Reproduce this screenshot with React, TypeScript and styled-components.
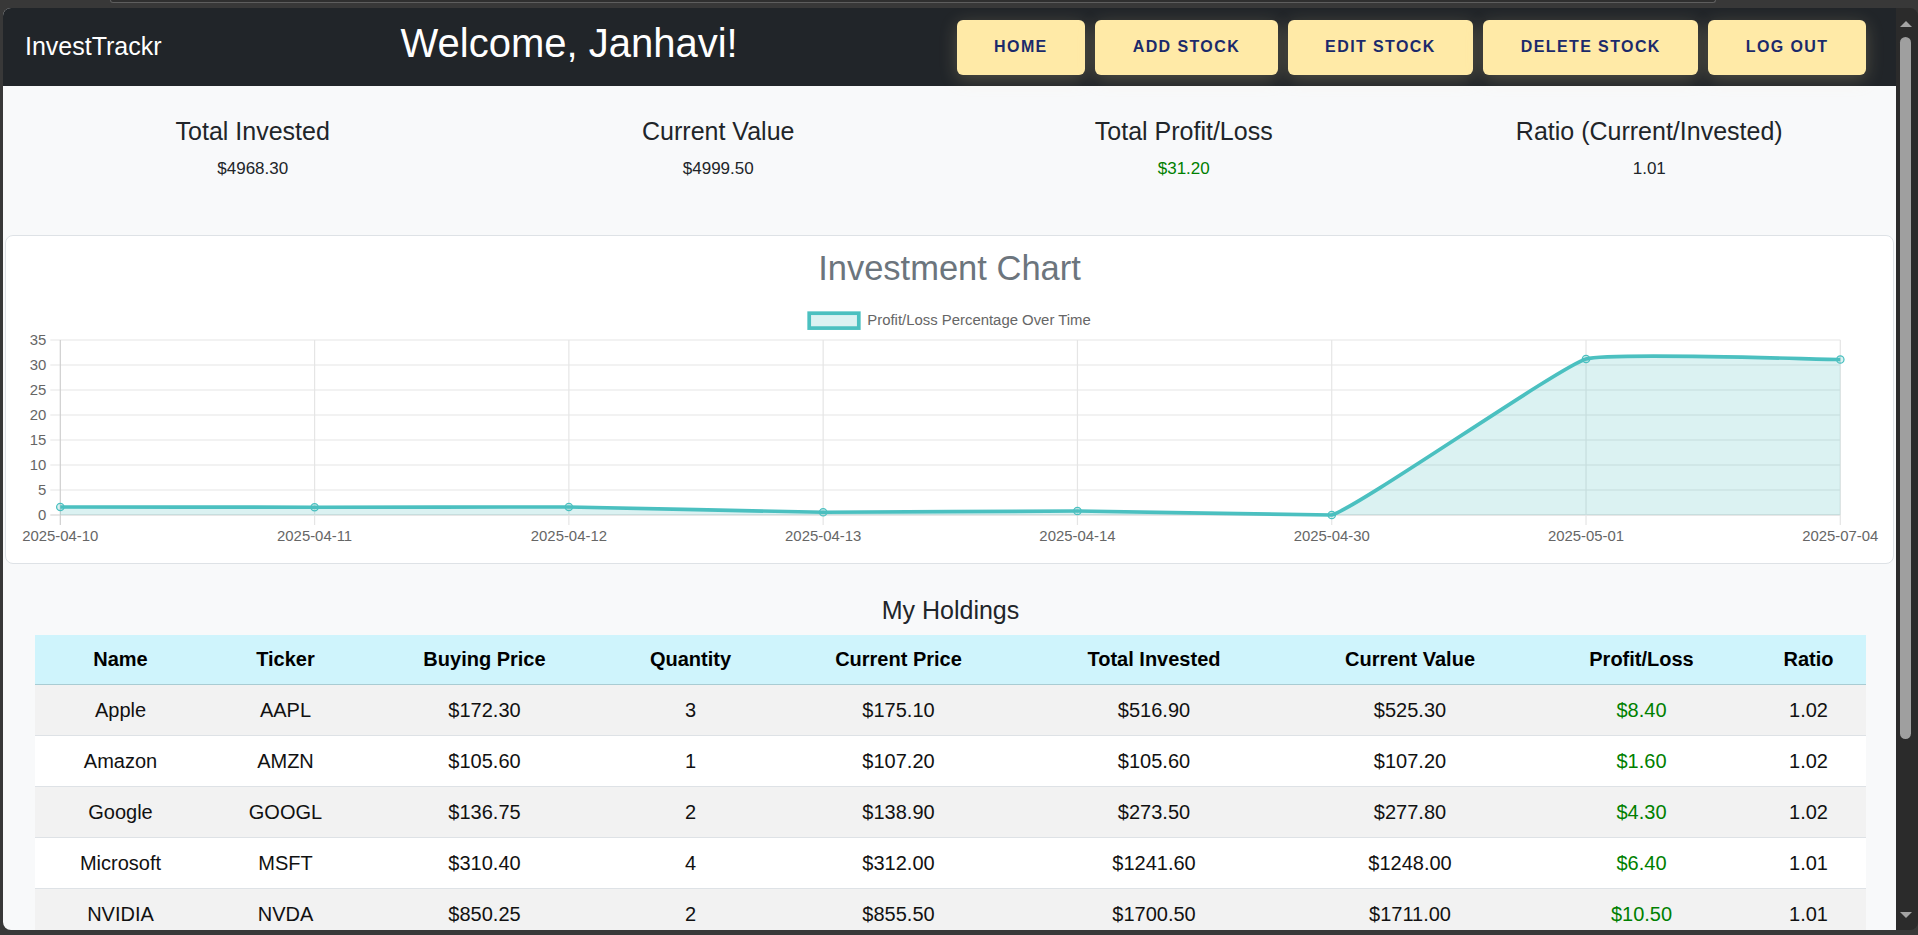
import React from 'react';
import styled, { createGlobalStyle } from 'styled-components';

const GlobalStyle = createGlobalStyle`
  html, body { margin: 0; padding: 0; height: 100%; }
  body {
    background: #383838;
    font-family: "Liberation Sans", Arial, Helvetica, sans-serif;
    overflow: hidden;
  }
  *, *::before, *::after { box-sizing: border-box; }
`;

const FONT = `"Liberation Sans", Arial, Helvetica, sans-serif`;

const Frame = styled.div`
  height: 100vh;
  display: flex;
  flex-direction: column;
  padding: 0 0 5px 3px;
  background: #383838;
`;

const TopStrip = styled.div`
  height: 8px;
  flex: none;
  display: flex;
`;

const TabEdge = styled.div`
  margin-left: 107px;
  width: 1606px;
  height: 3px;
  border: 1px solid #5e5e5e;
  border-top: none;
  border-radius: 0 0 8px 8px;
  background: #2f2f2f;
`;

const BrowserWindow = styled.div`
  flex: 1;
  min-height: 0;
  display: flex;
  border-radius: 8px;
  overflow: hidden;
`;

const Page = styled.main`
  flex: 1;
  min-width: 0;
  overflow: hidden;
  background: #f8f9fa;
`;

/* ---------- Scrollbar (window chrome) ---------- */

const ScrollBar = styled.div`
  width: 22px;
  flex: none;
  background: #2b2b2b;
  display: flex;
  flex-direction: column;
`;

const ScrollArrow = styled.div<{ $down?: boolean }>`
  height: 28px;
  flex: none;
  display: flex;
  justify-content: center;
  align-items: flex-start;
  padding: ${(p) => (p.$down ? '10px' : '13px')} 3px 0 0;

  &::before {
    content: '';
    width: 0;
    height: 0;
    border-left: 6px solid transparent;
    border-right: 6px solid transparent;
    ${(p) =>
      p.$down ? 'border-top: 6px solid #a3a3a3;' : 'border-bottom: 6px solid #a3a3a3;'}
  }
`;

const ScrollTrack = styled.div`
  flex: 1;
  padding: 1px 7px 0 4px;
`;

const ScrollThumb = styled.div`
  height: 702px;
  border-radius: 5.5px;
  background: #9f9f9f;
`;

/* ---------- Navbar ---------- */

const Navbar = styled.nav`
  height: 78px;
  background: #212529;
  display: flex;
  align-items: center;
  justify-content: space-between;
  padding: 0 30px 0 22px;
`;

const Brand = styled.a`
  color: #fff;
  font-size: 25px;
  line-height: 1.5;
  padding: 5px 0;
  margin-right: 20px;
  text-decoration: none;
`;

const Welcome = styled.h1`
  margin: 0 0 8px;
  font-size: 40px;
  font-weight: 400;
  line-height: 1.2;
  color: #fff;
`;

const NavButtons = styled.div`
  display: flex;
  gap: 10px;
`;

const NavButton = styled.button`
  height: 55px;
  padding: 0 37.5px;
  background: #ffeaa7;
  color: #1b2a6b;
  border: none;
  border-radius: 6px;
  font-family: ${FONT};
  font-weight: 700;
  font-size: 16px;
  letter-spacing: 1.4px;
  text-transform: uppercase;
  box-shadow: 0 4px 18px rgba(255, 234, 167, 0.22);
  cursor: pointer;
`;

/* ---------- Stats ---------- */

const StatsRow = styled.section`
  display: grid;
  grid-template-columns: repeat(4, 1fr);
  padding: 31px 14px 54px 17px;
`;

const Stat = styled.div`
  text-align: center;
`;

const StatTitle = styled.h4`
  margin: 0 0 10px;
  font-size: 25px;
  font-weight: 400;
  line-height: 28.8px;
  color: #212529;
`;

const StatValue = styled.p<{ $positive?: boolean }>`
  margin: 0;
  font-size: 17px;
  line-height: 25.5px;
  color: ${(p) => (p.$positive ? '#008000' : '#212529')};
`;

/* ---------- Chart ---------- */

const ChartCard = styled.section`
  margin: 0 2px;
  background: #fff;
  border: 1px solid #dee2e6;
  border-radius: 8px;
  padding-top: 12px;
`;

const ChartTitle = styled.h2`
  margin: 0;
  text-align: center;
  font-size: 34.5px;
  font-weight: 400;
  line-height: 1.2;
  color: #6c757d;
`;

const ChartSvg = styled.svg`
  display: block;
  width: 100%;
  height: 273px;
  font-family: ${FONT};
`;

/* ---------- Holdings ---------- */

const Holdings = styled.section`
  padding: 32.5px 30px 40px 32px;
`;

const HoldingsTitle = styled.h4`
  margin: 0 0 10px;
  text-align: center;
  font-size: 25px;
  font-weight: 400;
  line-height: 28.8px;
  color: #212529;
`;

const Table = styled.table`
  width: 100%;
  border-collapse: collapse;
  table-layout: fixed;
  font-size: 20px;
  color: #212529;
`;

const HeadCell = styled.th`
  background: #cff4fc;
  padding: 10px 8px;
  line-height: 29px;
  font-weight: 700;
  color: #000;
  text-align: center;
  border-bottom: 1px solid #a9ccd3;
`;

const Row = styled.tr<{ $striped: boolean }>`
  background: ${(p) => (p.$striped ? '#f2f2f2' : '#ffffff')};
`;

const Cell = styled.td<{ $positive?: boolean }>`
  padding: 10px 8px;
  line-height: 30px;
  text-align: center;
  border-bottom: 1px solid #dee2e6;
  color: ${(p) => (p.$positive ? '#008000' : '#111')};
`;

/* ---------- Data ---------- */

const stats = [
  { title: 'Total Invested', value: '$4968.30' },
  { title: 'Current Value', value: '$4999.50' },
  { title: 'Total Profit/Loss', value: '$31.20', positive: true },
  { title: 'Ratio (Current/Invested)', value: '1.01' },
];

const columns = [
  { label: 'Name', width: 171 },
  { label: 'Ticker', width: 159 },
  { label: 'Buying Price', width: 239 },
  { label: 'Quantity', width: 173 },
  { label: 'Current Price', width: 243 },
  { label: 'Total Invested', width: 268 },
  { label: 'Current Value', width: 244 },
  { label: 'Profit/Loss', width: 219 },
  { label: 'Ratio', width: 115 },
];

const holdings = [
  ['Apple', 'AAPL', '$172.30', '3', '$175.10', '$516.90', '$525.30', '$8.40', '1.02'],
  ['Amazon', 'AMZN', '$105.60', '1', '$107.20', '$105.60', '$107.20', '$1.60', '1.02'],
  ['Google', 'GOOGL', '$136.75', '2', '$138.90', '$273.50', '$277.80', '$4.30', '1.02'],
  ['Microsoft', 'MSFT', '$310.40', '4', '$312.00', '$1241.60', '$1248.00', '$6.40', '1.01'],
  ['NVIDIA', 'NVDA', '$850.25', '2', '$855.50', '$1700.50', '$1711.00', '$10.50', '1.01'],
];

const labels = ['2025-04-10', '2025-04-11', '2025-04-12', '2025-04-13', '2025-04-14', '2025-04-30', '2025-05-01', '2025-07-04'];
const values = [1.6, 1.55, 1.6, 0.55, 0.8, 0, 31.2, 31.1];

/* ---------- Chart drawing ---------- */

const W = 1887;
const H = 273;
const LEFT = 54.3;
const RIGHT = 1834.3;
const TOP = 50;
const BOTTOM = 225;
const UNIT = (BOTTOM - TOP) / 35;
const TEAL = 'rgb(75,192,192)';
const TEAL_FILL = 'rgba(75,192,192,0.2)';
const TICK = '#666';

type P = { x: number; y: number };

function buildPath(pts: P[], tension: number) {
  const clamp = (v: number, a: number, b: number) => Math.max(a, Math.min(b, v));
  const cps = pts.map((p, i) => {
    const prev = pts[i - 1] ?? p;
    const next = pts[i + 1] ?? p;
    const d01 = Math.hypot(p.x - prev.x, p.y - prev.y);
    const d12 = Math.hypot(next.x - p.x, next.y - p.y);
    let s01 = d01 / (d01 + d12);
    let s12 = d12 / (d01 + d12);
    if (!isFinite(s01)) s01 = 0;
    if (!isFinite(s12)) s12 = 0;
    const fa = tension * s01;
    const fb = tension * s12;
    return {
      prev: {
        x: clamp(p.x - fa * (next.x - prev.x), LEFT, RIGHT),
        y: clamp(p.y - fa * (next.y - prev.y), TOP, BOTTOM),
      },
      next: {
        x: clamp(p.x + fb * (next.x - prev.x), LEFT, RIGHT),
        y: clamp(p.y + fb * (next.y - prev.y), TOP, BOTTOM),
      },
    };
  });
  let d = `M ${pts[0].x} ${pts[0].y}`;
  for (let i = 1; i < pts.length; i++) {
    const a = cps[i - 1].next;
    const b = cps[i].prev;
    d += ` C ${a.x} ${a.y} ${b.x} ${b.y} ${pts[i].x} ${pts[i].y}`;
  }
  return d;
}

function InvestmentChart() {
  const step = (RIGHT - LEFT) / (labels.length - 1);
  const pts: P[] = values.map((v, i) => ({ x: LEFT + i * step, y: BOTTOM - v * UNIT }));
  const line = buildPath(pts, 0.1);
  const area = `${line} L ${pts[pts.length - 1].x} ${BOTTOM} L ${pts[0].x} ${BOTTOM} Z`;
  const yTicks = [35, 30, 25, 20, 15, 10, 5, 0];

  return (
    <ChartSvg viewBox={`0 0 ${W} ${H}`} preserveAspectRatio="none">
      <rect x={803.2} y={23.2} width={49.6} height={14.9} fill={TEAL_FILL} stroke={TEAL} strokeWidth={3.7} />
      <text x={861.3} y={34.6} fontSize={14.9} fill={TICK}>
        Profit/Loss Percentage Over Time
      </text>

      {yTicks.map((v) => {
        const y = BOTTOM - v * UNIT;
        return (
          <g key={`h${v}`}>
            <line x1={LEFT - 10} x2={RIGHT} y1={y} y2={y} stroke={v === 0 ? '#cfcfcf' : '#e5e5e5'} strokeWidth={1.2} />
            <text x={40.4} y={y + 5.2} fontSize={14.9} fill={TICK} textAnchor="end">
              {v}
            </text>
          </g>
        );
      })}

      {labels.map((l, i) => {
        const x = LEFT + i * step;
        return (
          <g key={l}>
            <line x1={x} x2={x} y1={TOP} y2={BOTTOM + 10} stroke={i === 0 ? '#cfcfcf' : '#e5e5e5'} strokeWidth={1.2} />
            <text x={x} y={251.3} fontSize={14.9} fill={TICK} textAnchor="middle">
              {l}
            </text>
          </g>
        );
      })}

      <path d={area} fill={TEAL_FILL} stroke="none" />
      <path d={line} fill="none" stroke={TEAL} strokeWidth={3.7} />
      {pts.map((p, i) => (
        <circle key={i} cx={p.x} cy={p.y} r={3.7} fill={TEAL_FILL} stroke={TEAL} strokeWidth={1.24} />
      ))}
    </ChartSvg>
  );
}

/* ---------- App ---------- */

export default function App() {
  return (
    <>
      <GlobalStyle />
      <Frame>
        <TopStrip>
          <TabEdge />
        </TopStrip>
        <BrowserWindow>
          <Page>
            <Navbar>
              <Brand href="#">InvestTrackr</Brand>
              <Welcome>Welcome, Janhavi!</Welcome>
              <NavButtons>
                <NavButton>Home</NavButton>
                <NavButton>Add Stock</NavButton>
                <NavButton>Edit Stock</NavButton>
                <NavButton>Delete Stock</NavButton>
                <NavButton>Log Out</NavButton>
              </NavButtons>
            </Navbar>

            <StatsRow>
              {stats.map((s) => (
                <Stat key={s.title}>
                  <StatTitle>{s.title}</StatTitle>
                  <StatValue $positive={s.positive}>{s.value}</StatValue>
                </Stat>
              ))}
            </StatsRow>

            <ChartCard>
              <ChartTitle>Investment Chart</ChartTitle>
              <InvestmentChart />
            </ChartCard>

            <Holdings>
              <HoldingsTitle>My Holdings</HoldingsTitle>
              <Table>
                <colgroup>
                  {columns.map((c) => (
                    <col key={c.label} style={{ width: c.width }} />
                  ))}
                </colgroup>
                <thead>
                  <tr>
                    {columns.map((c) => (
                      <HeadCell key={c.label}>{c.label}</HeadCell>
                    ))}
                  </tr>
                </thead>
                <tbody>
                  {holdings.map((row, i) => (
                    <Row key={row[1]} $striped={i % 2 === 0}>
                      {row.map((cell, j) => (
                        <Cell key={j} $positive={j === 7}>
                          {cell}
                        </Cell>
                      ))}
                    </Row>
                  ))}
                </tbody>
              </Table>
            </Holdings>
          </Page>
          <ScrollBar aria-hidden="true">
            <ScrollArrow />
            <ScrollTrack>
              <ScrollThumb />
            </ScrollTrack>
            <ScrollArrow $down />
          </ScrollBar>
        </BrowserWindow>
      </Frame>
    </>
  );
}
